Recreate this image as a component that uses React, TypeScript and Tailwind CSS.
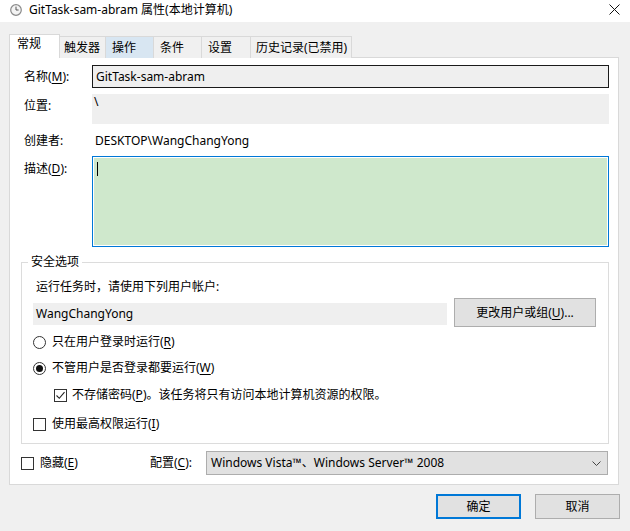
import React from "react";

const FONT = { fontFamily: '"Noto Sans", "Noto Sans CJK SC", sans-serif' };

function CheckBox({ checked }: { checked?: boolean }) {
  return (
    <div className="w-[13px] h-[13px] border border-[#333333] bg-white flex items-center justify-center shrink-0">
      {checked && (
        <svg width="11" height="11" viewBox="0 0 11 11">
          <path d="M1.5 5.5 L4.3 8.3 L9.5 2.2" fill="none" stroke="#222" strokeWidth="1.1" />
        </svg>
      )}
    </div>
  );
}

function Radio({ checked }: { checked?: boolean }) {
  return (
    <div className="w-[13px] h-[13px] rounded-full border border-[#333333] bg-white flex items-center justify-center shrink-0">
      {checked && <div className="w-[7px] h-[7px] rounded-full bg-[#111]" />}
    </div>
  );
}

function U({ children }: { children: React.ReactNode }) {
  return <span className="underline underline-offset-2">{children}</span>;
}

export default function App() {
  return (
    <div
      className="w-[630px] h-[531px] bg-[#f0f0f0] flex flex-col text-[12px] text-black overflow-hidden"
      style={FONT}
    >
      {/* Title bar */}
      <div className="h-[22px] bg-white flex items-center shrink-0">
        <div className="ml-[10px] w-[12px] h-[12px] mb-[2px]">
          <svg width="12" height="12" viewBox="0 0 12 12">
            <circle cx="6" cy="6" r="5.3" fill="#f4f4f4" stroke="#8a8a8a" strokeWidth="1.2" />
            <path d="M6 2.6 V6 H8.6" fill="none" stroke="#555" strokeWidth="1" />
          </svg>
        </div>
        <div className="ml-[7px] leading-[16px] mb-[3px]">GitTask-sam-abram 属性(本地计算机)</div>
        <div className="ml-auto mr-[10px] mb-[4px]">
          <svg width="11" height="11" viewBox="0 0 11 11">
            <path d="M0.5 0.5 L10.5 10.5 M10.5 0.5 L0.5 10.5" stroke="#111" strokeWidth="1" />
          </svg>
        </div>
      </div>

      {/* Tabs */}
      <div className="mt-[12px] ml-[9px] flex items-end h-[24px] relative z-10">
        <div className="w-[51px] h-[24px] bg-white border border-b-0 border-[#d9d9d9] pl-[7px] leading-[18px]">常规</div>
        <div className="w-[46px] h-[22px] bg-[#f0f0f0] border border-l-0 border-b-0 border-[#d9d9d9] pl-[4px] leading-[21px]">触发器</div>
        <div className="w-[48px] h-[22px] bg-[#d8e6f2] border border-l-0 border-b-0 border-[#d9d9d9] pl-[6px] leading-[21px]">操作</div>
        <div className="w-[48px] h-[22px] bg-[#f0f0f0] border border-l-0 border-b-0 border-[#d9d9d9] pl-[6px] leading-[21px]">条件</div>
        <div className="w-[49px] h-[22px] bg-[#f0f0f0] border border-l-0 border-b-0 border-[#d9d9d9] pl-[6px] leading-[21px]">设置</div>
        <div className="w-[101px] h-[22px] bg-[#f0f0f0] border border-l-0 border-b-0 border-[#d9d9d9] pl-[5px] leading-[21px]">历史记录(已禁用)</div>
      </div>

      {/* Panel */}
      <div className="-mt-[1px] ml-[9px] w-[610px] h-[428px] bg-white border border-[#d9d9d9] flex flex-col shrink-0">
        {/* Name */}
        <div className="mt-[7px] flex items-center h-[23px]">
          <div className="ml-[14px] w-[68px]">
            名称(<U>M</U>):
          </div>
          <div className="w-[517px] h-[23px] bg-[#efefef] border border-[#1a1a1a] flex items-center pl-[3px]">
            GitTask-sam-abram
          </div>
        </div>
        {/* Location */}
        <div className="mt-[6px] flex h-[30px]">
          <div className="ml-[14px] w-[68px] pt-[3px]">位置:</div>
          <div className="w-[517px] h-[30px] bg-[#efefef] pl-[2px] pt-0 leading-[16px]">\</div>
        </div>
        {/* Creator */}
        <div className="mt-[7px] flex items-center h-[20px]">
          <div className="ml-[14px] w-[68px]">创建者:</div>
          <div className="pl-[3px]">DESKTOP\WangChangYong</div>
        </div>
        {/* Description */}
        <div className="mt-[5px] flex h-[91px]">
          <div className="ml-[14px] w-[68px] pt-[4px]">
            描述(<U>D</U>):
          </div>
          <div className="w-[517px] h-[91px] border border-[#0078d7] p-[1px]">
            <div className="w-full h-full bg-[#cfe8cc] pl-[3px] pt-[4px]">
              <div className="w-[1px] h-[14px] bg-black" />
            </div>
          </div>
        </div>

        {/* Security group */}
        <div className="mt-[15px] ml-[11px] w-[588px] h-[182px] border border-[#dcdcdc] flex flex-col">
          <div className="-mt-[10px] ml-[6px] h-[18px] leading-[18px] bg-white w-fit px-[3px]">安全选项</div>
          <div className="mt-[6px] h-[20px] flex items-center ml-[14px]">运行任务时，请使用下列用户帐户:</div>
          <div className="mt-[1px] h-[29px] flex items-start ml-[11px]">
            <div className="mt-[5px] w-[414px] h-[22px] bg-[#efefef] flex items-center pl-[3px]">WangChangYong</div>
            <div className="ml-[7px] w-[142px] h-[29px] bg-[#e1e1e1] border border-[#adadad] flex items-center justify-center">
              更改用户或组(<U>U</U>)...
            </div>
          </div>
          <div className="mt-[5px] h-[20px] flex items-center ml-[11px]">
            <Radio />
            <div className="ml-[6px]">只在用户登录时运行(<U>R</U>)</div>
          </div>
          <div className="mt-[6px] h-[20px] flex items-center ml-[11px]">
            <Radio checked />
            <div className="ml-[6px]">不管用户是否登录都要运行(<U>W</U>)</div>
          </div>
          <div className="mt-[7px] h-[20px] flex items-center ml-[32px]">
            <CheckBox checked />
            <div className="ml-[5px]">不存储密码(<U>P</U>)。该任务将只有访问本地计算机资源的权限。</div>
          </div>
          <div className="mt-[9px] h-[20px] flex items-center ml-[11px]">
            <CheckBox />
            <div className="ml-[6px]">使用最高权限运行(<U>I</U>)</div>
          </div>
        </div>

        {/* Hidden / config */}
        <div className="mt-[7px] h-[24px] flex items-center">
          <div className="ml-[11px]">
            <CheckBox />
          </div>
          <div className="ml-[6px] w-[110px]">隐藏(<U>E</U>)</div>
          <div className="w-[56px]">配置(<U>C</U>):</div>
          <div className="w-[402px] h-[24px] bg-[#e1e1e1] border border-[#adadad] flex items-center pl-[4px] pr-[6px]">
            <div className="flex-1">Windows Vista™、Windows Server™ 2008</div>
            <svg width="9" height="5" viewBox="0 0 9 5">
              <path d="M0.5 0.5 L4.5 4.5 L8.5 0.5" fill="none" stroke="#444" strokeWidth="1" />
            </svg>
          </div>
        </div>
      </div>

      {/* Buttons */}
      <div className="mt-[9px] flex justify-end pr-[10px] gap-[14px]">
        <div className="w-[85px] h-[25px] bg-[#e1e1e1] border-2 border-[#0078d7] flex items-center justify-center">确定</div>
        <div className="w-[85px] h-[25px] bg-[#e1e1e1] border border-[#adadad] flex items-center justify-center">取消</div>
      </div>
    </div>
  );
}
